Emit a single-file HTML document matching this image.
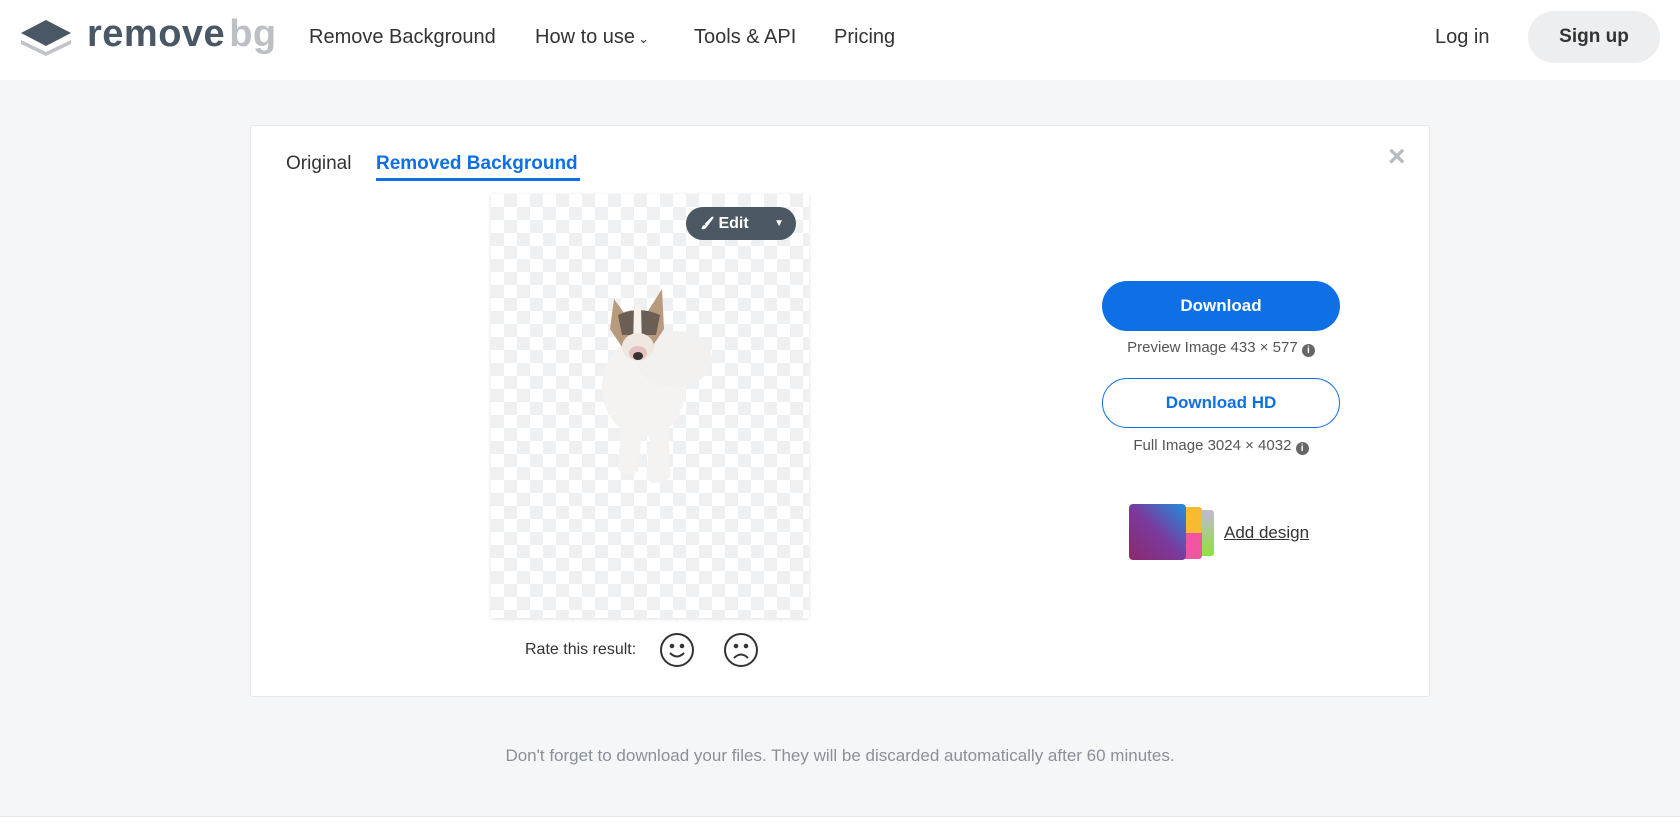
<!DOCTYPE html>
<html><head><meta charset="utf-8"><style>
*{margin:0;padding:0;box-sizing:border-box}
body{width:1680px;height:840px;overflow:hidden;background:#f5f6f8;font-family:"Liberation Sans",sans-serif;position:relative;color:#454f5b}
.hdr{position:absolute;left:0;top:0;width:1680px;height:80px;background:#fff}
.a{position:absolute;white-space:nowrap}
.nav{font-size:20px;color:#333;top:26px}
.card{position:absolute;left:250px;top:125px;width:1180px;height:572px;background:#fff;border:1px solid #e6e8eb;border-radius:3px}
.chk{position:absolute;left:491px;top:194px;width:318px;height:424px;background-color:#fff;background-image:linear-gradient(45deg,#eef0f2 25%,transparent 25%,transparent 75%,#eef0f2 75%),linear-gradient(45deg,#eef0f2 25%,transparent 25%,transparent 75%,#eef0f2 75%);background-size:26px 26px;background-position:0 0,13px 13px;box-shadow:0 1px 4px rgba(0,0,0,.12)}
.btn{position:absolute;left:1102px;width:238px;height:50px;border-radius:25px;font-size:17px;font-weight:bold;text-align:center;line-height:50px}
.sm{font-size:15px;color:#555;text-align:center;left:1102px;width:238px}
.i{display:inline-block;width:13px;height:13px;border-radius:50%;background:#666;color:#fff;font-size:10px;line-height:13px;font-weight:bold;vertical-align:-1px}
</style></head><body>
<div class="hdr"></div>
<svg class="a" style="left:19px;top:18px" width="54" height="38" viewBox="0 0 54 38"><path d="M2 22 L27 34 L52 22 L52 26 L27 38 L2 26Z" fill="#c0c4c8"/><path d="M27 2 L52 15 L27 28 L2 15Z" fill="#4a5764"/></svg>
<div class="a" style="left:87px;top:13px;font-size:38px;font-weight:bold;color:#4a5764;letter-spacing:0.5px">remove<span style="color:#bcc0c4;margin-left:4px">bg</span></div>
<div class="a nav" style="left:309px">Remove Background</div>
<div class="a nav" style="left:535px">How to use<span style="font-size:13px;margin-left:3px">&#8964;</span></div>
<div class="a nav" style="left:694px">Tools &amp; API</div>
<div class="a nav" style="left:834px">Pricing</div>
<div class="a nav" style="left:1435px">Log in</div>
<div class="a" style="left:1528px;top:11px;width:132px;height:52px;border-radius:26px;background:#eceef0;font-size:19px;font-weight:bold;color:#333;text-align:center;line-height:52px">Sign up</div>
<div class="card"></div>
<div class="a" style="left:286px;top:153px;font-size:19px;color:#333">Original</div>
<div class="a" style="left:376px;top:153px;font-size:19px;color:#0f70e6;font-weight:bold">Removed Background</div>
<div class="a" style="left:376px;top:178px;width:204px;height:3px;background:#0f70e6"></div>
<div class="a" style="left:1388px;top:140px;font-size:30px;color:#b8bcc0;font-weight:bold">&#215;</div>
<div class="chk"></div>
<svg class="a" style="left:594px;top:287px" width="128" height="205" viewBox="0 0 128 205">
<ellipse cx="50" cy="100" rx="42" ry="50" fill="#f4f3f1"/>
<ellipse cx="80" cy="72" rx="38" ry="28" fill="#f2f1ef"/>
<path d="M28 120 L24 182 Q32 194 44 184 L50 125Z M58 125 L52 192 Q64 202 76 190 L74 120Z" fill="#f4f3f1"/>
<path d="M20 12 L30 26 L54 24 L68 2 L70 42 L58 60 L28 60 L16 42Z" fill="#b89a7c"/>
<path d="M24 28 Q44 18 66 28 L62 48 L28 48Z" fill="#6b5e55"/>
<path d="M40 18 L47 18 L48 62 L39 62Z" fill="#f5f2ee"/>
<ellipse cx="44" cy="60" rx="16" ry="14" fill="#f0e8e0"/>
<ellipse cx="44" cy="66" rx="9" ry="7" fill="#e4c2c0"/><ellipse cx="44" cy="69" rx="5" ry="4" fill="#3a2f2f"/>
</svg>
<div class="a" style="left:686px;top:207px;width:110px;height:33px;border-radius:17px;background:#4b5763;color:#fff;font-size:16px;font-weight:bold;line-height:33px;padding-left:14px"><svg width="14" height="14" viewBox="0 0 14 14" style="vertical-align:-2px"><path d="M13 1 L6 8 L7 9 Z" fill="#fff" stroke="#fff" stroke-width="2"/><path d="M5 9 Q2 9 2 12 L1 13 Q6 14 7 10Z" fill="#fff"/></svg> Edit<span style="position:absolute;right:12px;font-size:10px">&#9660;</span></div>
<div class="a" style="left:525px;top:641px;font-size:16px;color:#333">Rate this result:</div>
<svg class="a" style="left:660px;top:632px" width="100" height="36" viewBox="0 0 100 36" fill="none" stroke="#333" stroke-width="2"><circle cx="17" cy="18" r="16"/><circle cx="12" cy="14" r="1.3" fill="#333"/><circle cx="22" cy="14" r="1.3" fill="#333"/><path d="M10 21 Q17 28 24 21"/><circle cx="81" cy="18" r="16"/><circle cx="76" cy="14" r="1.3" fill="#333"/><circle cx="86" cy="14" r="1.3" fill="#333"/><path d="M74 26 Q81 19 88 26"/></svg>
<div class="btn" style="top:281px;background:#0f70e6;color:#fff">Download</div>
<div class="a sm" style="top:339px">Preview Image 433 × 577 <span class="i">i</span></div>
<div class="btn" style="top:378px;border:1.5px solid #0f70e6;color:#0f70e6;line-height:47px">Download HD</div>
<div class="a sm" style="top:437px">Full Image 3024 × 4032 <span class="i">i</span></div>
<div class="a" style="left:1197px;top:510px;width:17px;height:46px;border-radius:3px;background:linear-gradient(#c3b7d6,#8ee23a)"></div>
<div class="a" style="left:1180px;top:507px;width:22px;height:52px;border-radius:3px;background:linear-gradient(#f7bb33 50%,#f0559f 50%)"></div>
<div class="a" style="left:1129px;top:504px;width:57px;height:56px;border-radius:4px;background:linear-gradient(45deg,#8a2a6c,#7a3a9e 50%,#1f8fe0)"></div>
<div class="a" style="left:1224px;top:523px;font-size:17px;color:#333;text-decoration:underline">Add design</div>
<div class="a" style="left:0;width:1680px;top:746px;text-align:center;font-size:17px;color:#8a9097">Don't forget to download your files. They will be discarded automatically after 60 minutes.</div>
<div class="a" style="left:0;top:816px;width:1680px;height:24px;background:#fff;border-top:1px solid #e6e8eb"></div>
</body></html>
